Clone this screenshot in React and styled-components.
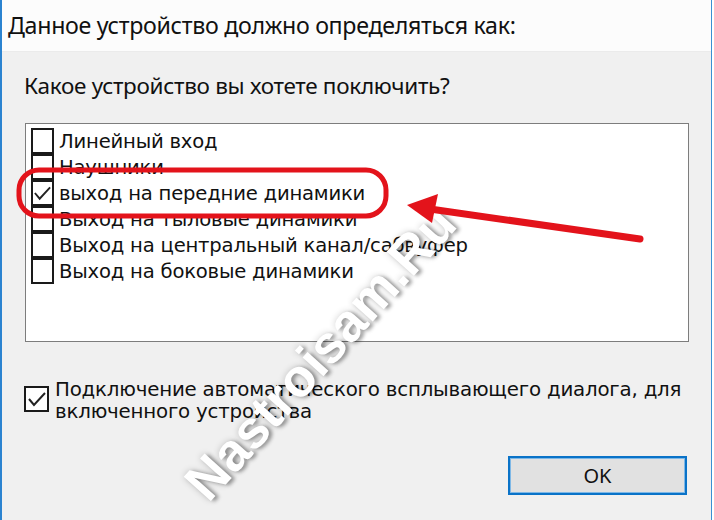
import React from "react";
import styled, { createGlobalStyle } from "styled-components";

const Global = createGlobalStyle`
  html, body { margin: 0; padding: 0; background: #ffffff; }
  body { font-family: "Noto Sans", sans-serif; }
`;

const Window = styled.div`
  position: relative;
  width: 709px;
  height: 520px;
  border-left: 2px solid #2b83d0;
  border-right: 1px solid #3a8fd3;
  display: flex;
  flex-direction: column;
  background: #f0f0f0;
  overflow: hidden;
`;

const Header = styled.div`
  height: 52px;
  flex: none;
  background: #fcfcfc;
  border-bottom: 1px solid #ebebeb;
  box-sizing: border-box;
  display: flex;
  align-items: center;
  padding: 0 0 2px 6px;
  font-family: "Noto Sans", sans-serif;
  font-size: 23.2px;
  color: #111;
  letter-spacing: -0.3px;
`;

const Body = styled.div`
  flex: 1;
  display: flex;
  flex-direction: column;
  padding: 22px 24px 0 23px;
`;

const Question = styled.div`
  font-family: "Noto Sans", sans-serif;
  font-size: 22.5px;
  line-height: 24px;
  color: #111;
  letter-spacing: -0.3px;
  margin-left: -1px;
`;

const ListBox = styled.div`
  margin-top: 25px;
  width: 664px;
  height: 219px;
  box-sizing: border-box;
  background: #ffffff;
  border: 1px solid #7d7d7d;
  padding: 4px 5px;
  display: flex;
  flex-direction: column;
`;

const Row = styled.div`
  display: flex;
  align-items: center;
  height: 26px;
  gap: 5px;
`;

const Box = styled.div`
  width: ${(p) => p.$w || 23}px;
  height: ${(p) => p.$h || 26}px;
  box-sizing: border-box;
  border: 2px solid #1a1a1a;
  background: #fff;
  flex: none;
  display: flex;
  align-items: center;
  justify-content: center;
  margin-top: ${(p) => (p.$stack ? "-1px" : "0")};
`;

const ItemText = styled.span`
  font-family: "DejaVu Sans", sans-serif;
  font-size: 19.6px;
  color: #111;
  letter-spacing: -0.2px;
  white-space: nowrap;
`;

const Footer = styled.div`
  margin-top: 37px;
  display: flex;
  align-items: flex-start;
  gap: 6px;
  margin-left: -1px;
`;

const FooterText = styled.div`
  font-family: "DejaVu Sans", sans-serif;
  font-size: 19.8px;
  line-height: 22px;
  color: #111;
  letter-spacing: -0.2px;
`;

const FooterBox = styled(Box)`
  margin-top: 7px;
`;

const Buttons = styled.div`
  margin-top: 33px;
  display: flex;
  justify-content: flex-end;
`;

const OkButton = styled.button`
  width: 179px;
  height: 39px;
  box-sizing: border-box;
  background: #e1e1e1;
  border: 2px solid #0a73c8;
  box-shadow: inset 0 0 0 1px #7fb8e6;
  font-family: "Noto Sans", sans-serif;
  font-size: 20px;
  color: #111;
  padding: 0;
`;

const Overlay = styled.svg`
  position: absolute;
  left: -2px;
  top: 0;
  pointer-events: none;
`;

const Watermark = styled.div`
  position: absolute;
  left: 108px;
  top: 322px;
  width: 420px;
  text-align: center;
  transform: rotate(-48deg);
  font-family: "Liberation Sans", sans-serif;
  font-weight: bold;
  font-size: 53px;
  color: #ffffff;
  text-shadow: 2px 3px 4px rgba(0, 0, 0, 0.35), 0 0 7px rgba(0, 0, 0, 0.2);
  pointer-events: none;
  white-space: nowrap;
`;

const Check = () => (
  <svg width="20" height="18" viewBox="0 0 20 18">
    <polyline points="2,9 7,15 18,3" fill="none" stroke="#222" strokeWidth="2" />
  </svg>
);

const items = [
  { t: "Линейный вход" },
  { t: "Наушники" },
  { t: "выход на передние динамики", c: true },
  { t: "Выход на тыловые динамики" },
  { t: "Выход на центральный канал/сабвуфер" },
  { t: "Выход на боковые динамики" },
];

export default function App() {
  return (
    <>
      <Global />
      <Window>
        <Header>Данное устройство должно определяться как:</Header>
        <Body>
          <Question>Какое устройство вы хотете поключить?</Question>
          <ListBox>
            {items.map((it, i) => (
              <Row key={i}>
                <Box $stack={i > 0}>{it.c && <Check />}</Box>
                <ItemText>{it.t}</ItemText>
              </Row>
            ))}
          </ListBox>
          <Footer>
            <FooterBox $w={25} $h={26}>
              <Check />
            </FooterBox>
            <FooterText>
              Подключение автоматического всплывающего диалога, для
              <br />
              включенного устройства
            </FooterText>
          </Footer>
          <Buttons>
            <OkButton>OK</OkButton>
          </Buttons>
        </Body>
        <Watermark>Nastroisam.Ru</Watermark>
        <Overlay width="714" height="520" viewBox="0 0 714 520">
          <rect x="19" y="170" width="367" height="46" rx="20" ry="20" fill="none" stroke="#e3131b" strokeWidth="5" />
          <line x1="640" y1="239" x2="430" y2="209" stroke="#e3131b" strokeWidth="7" strokeLinecap="round" />
          <polygon points="407,205 438,194 432,223" fill="#e3131b" />
        </Overlay>
      </Window>
    </>
  );
}
